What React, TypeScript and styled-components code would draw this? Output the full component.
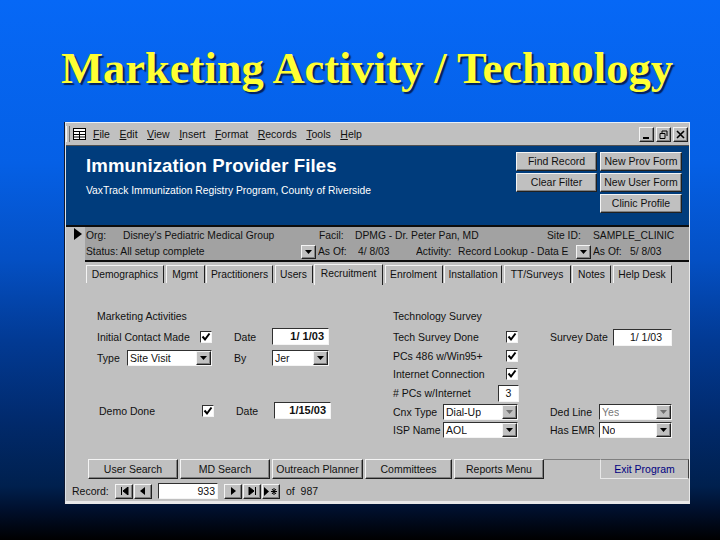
import styled, { createGlobalStyle } from 'styled-components'

const GlobalStyle = createGlobalStyle`
  html,
  body {
    margin: 0;
    padding: 0;
  }
`

const Arrow = ({ muted }: { muted?: boolean }) => (
  <svg width="7" height="4" viewBox="0 0 7 4">
    <path d="M0 0h7L3.5 4z" fill={muted ? '#707070' : '#000'} />
  </svg>
)

const Check = () => (
  <svg width="10" height="10" viewBox="0 0 10 10">
    <path d="M1.5 4.5L4 7.5L8.5 1.5" fill="none" stroke="#000" strokeWidth="2" />
  </svg>
)

function Select({ value, faded, muted }: { value: string; faded?: boolean; muted?: boolean }) {
  return (
    <SelectBox>
      <SelectValue $faded={faded}>{value}</SelectValue>
      <SelectButton>
        <Arrow muted={muted || faded} />
      </SelectButton>
    </SelectBox>
  )
}

function CheckBox() {
  return (
    <CheckBoxBox>
      <Check />
    </CheckBoxBox>
  )
}

const TABS = [
  { label: 'Demographics', width: 78 },
  { label: 'Mgmt', width: 39 },
  { label: 'Practitioners', width: 67 },
  { label: 'Users', width: 38 },
  { label: 'Recruitment', width: 69, active: true },
  { label: 'Enrolment', width: 58 },
  { label: 'Installation', width: 58 },
  { label: 'TT/Surveys', width: 67 },
  { label: 'Notes', width: 39 },
  { label: 'Help Desk', width: 59 },
]

const MENUS = [
  ['F', 'ile'],
  ['E', 'dit'],
  ['V', 'iew'],
  ['I', 'nsert'],
  ['F', 'ormat'],
  ['R', 'ecords'],
  ['T', 'ools'],
  ['H', 'elp'],
]

export default function App() {
  return (
    <Slide>
      <GlobalStyle />
      <Title>Marketing Activity / Technology</Title>
      <Window>
        <MenuBar>
          <Grip />
          <svg width="13" height="12" viewBox="0 0 13 12">
            <rect x="0.5" y="0.5" width="12" height="11" fill="#fff" stroke="#000" />
            <path d="M0 3.5h13M0 6.5h13M0 9h13M6.5 3v9" stroke="#000" />
          </svg>
          <MenuList>
            {MENUS.map(([key, rest]) => (
              <MenuItem key={key + rest}>
                <u>{key}</u>
                {rest}
              </MenuItem>
            ))}
          </MenuList>
          <WindowControls>
            <WindowButton>
              <svg width="9" height="9" viewBox="0 0 9 9">
                <path d="M1 8h6" stroke="#000" strokeWidth="2" />
              </svg>
            </WindowButton>
            <WindowButton>
              <svg width="9" height="9" viewBox="0 0 9 9">
                <path d="M3 1h5v5M3 1v2M1 3.5h5v5H1z" fill="none" stroke="#000" />
              </svg>
            </WindowButton>
            <WindowButton>
              <svg width="9" height="9" viewBox="0 0 9 9">
                <path d="M1 1l7 7M8 1L1 8" stroke="#000" strokeWidth="1.6" />
              </svg>
            </WindowButton>
          </WindowControls>
        </MenuBar>

        <Header>
          <HeaderText>
            <HeaderTitle>Immunization Provider Files</HeaderTitle>
            <HeaderSubtitle>VaxTrack Immunization Registry Program, County of Riverside</HeaderSubtitle>
          </HeaderText>
          <HeaderButtons>
            <HeaderButton>Find Record</HeaderButton>
            <HeaderButton>New Prov Form</HeaderButton>
            <HeaderButton>
              <ClippedLabel>Clear Filter</ClippedLabel>
            </HeaderButton>
            <HeaderButton>
              <ClippedLabel>New User Form</ClippedLabel>
            </HeaderButton>
            <HeaderButton $column={2}>Clinic Profile</HeaderButton>
          </HeaderButtons>
        </Header>

        <InfoSection>
          <RecordSelector>
            <svg width="8" height="12" viewBox="0 0 8 12">
              <path d="M0 0l8 6l-8 6z" fill="#000" />
            </svg>
          </RecordSelector>
          <InfoStrip>
            <InfoRow>
              <InfoCell $width={37}>Org:</InfoCell>
              <InfoCell $width={196}>Disney's Pediatric Medical Group</InfoCell>
              <InfoCell $width={36}>Facil:</InfoCell>
              <InfoCell $width={192}>DPMG - Dr. Peter Pan, MD</InfoCell>
              <InfoCell $width={46}>Site ID:</InfoCell>
              <InfoCell $width={90}>SAMPLE_CLINIC</InfoCell>
            </InfoRow>
            <InfoRow>
              <InfoCell $width={215}>Status: All setup complete</InfoCell>
              <InfoDrop>
                <Arrow />
              </InfoDrop>
              <InfoCell $width={40}>As Of:</InfoCell>
              <InfoCell $width={58}>4/ 8/03</InfoCell>
              <InfoCell $width={42}>Activity:</InfoCell>
              <InfoCell $width={118}>Record Lookup - Data E</InfoCell>
              <InfoDrop>
                <Arrow />
              </InfoDrop>
              <InfoCell $width={37}>As Of:</InfoCell>
              <InfoCell $width={50}>5/ 8/03</InfoCell>
            </InfoRow>
          </InfoStrip>
        </InfoSection>

        <TabBar>
          {TABS.map((tab) => (
            <Tab key={tab.label} $width={tab.width} $active={tab.active}>
              {tab.label}
            </Tab>
          ))}
        </TabBar>

        <FormBody>
          <MarketingPanel>
            <PanelHeading>Marketing Activities</PanelHeading>
            <MarketingGrid>
              <SpanLabel $span={2}>Initial Contact Made</SpanLabel>
              <CheckBox />
              <Spacer />
              <FieldLabel>Date</FieldLabel>
              <DateInput $bold>1/ 1/03</DateInput>
              <FieldLabel>Type</FieldLabel>
              <SelectCell $span={2}>
                <Select value="Site Visit" />
              </SelectCell>
              <Spacer />
              <FieldLabel>By</FieldLabel>
              <Select value="Jer" />
            </MarketingGrid>
            <DemoGrid>
              <SpanLabel $span={2}>Demo Done</SpanLabel>
              <CheckBox />
              <Spacer />
              <FieldLabel>Date</FieldLabel>
              <DateInput $bold>1/15/03</DateInput>
            </DemoGrid>
          </MarketingPanel>

          <TechPanel>
            <PanelHeading>Technology Survey</PanelHeading>
            <TechGrid>
              <SpanLabel $span={3}>Tech Survey Done</SpanLabel>
              <CheckBox />
              <Spacer />
              <SpanLabel $span={2}>Survey Date</SpanLabel>
              <DateInput>1/ 1/03</DateInput>

              <SpanLabel $span={3}>PCs 486 w/Win95+</SpanLabel>
              <CheckBox />
              <RowFill />

              <SpanLabel $span={3}>Internet Connection</SpanLabel>
              <CheckBox />
              <RowFill />

              <SpanLabel $span={2}>#&nbsp;PCs w/Internet</SpanLabel>
              <CountCell>
                <CountInput>3</CountInput>
              </CountCell>
              <RowFill />

              <FieldLabel>Cnx Type</FieldLabel>
              <SelectCell $span={3}>
                <Select value="Dial-Up" muted />
              </SelectCell>
              <Spacer />
              <FieldLabel>Ded Line</FieldLabel>
              <SelectCell $span={2}>
                <Select value="Yes" faded />
              </SelectCell>

              <FieldLabel>ISP Name</FieldLabel>
              <SelectCell $span={3}>
                <Select value="AOL" />
              </SelectCell>
              <Spacer />
              <FieldLabel>Has EMR</FieldLabel>
              <SelectCell $span={2}>
                <Select value="No" />
              </SelectCell>
            </TechGrid>
          </TechPanel>
        </FormBody>

        <ActionBar>
          <ActionButton $width={90}>User Search</ActionButton>
          <ActionButton $width={90}>MD Search</ActionButton>
          <ActionButton $width={91}>Outreach Planner</ActionButton>
          <ActionButton $width={87}>Committees</ActionButton>
          <ActionButton $width={90}>Reports Menu</ActionButton>
          <BarRule />
          <ExitButton>Exit Program</ExitButton>
        </ActionBar>

        <NavBar>
          <NavLabel>Record:</NavLabel>
          <NavButton>
            <svg width="9" height="8" viewBox="0 0 9 8">
              <path d="M1.5 0v8M8 0v8L3 4z" stroke="#000" fill="#000" />
            </svg>
          </NavButton>
          <NavButton>
            <svg width="6" height="8" viewBox="0 0 6 8">
              <path d="M5 0v8L0 4z" fill="#000" />
            </svg>
          </NavButton>
          <NavInput>933</NavInput>
          <NavButton>
            <svg width="6" height="8" viewBox="0 0 6 8">
              <path d="M1 0v8l5-4z" fill="#000" />
            </svg>
          </NavButton>
          <NavButton>
            <svg width="9" height="8" viewBox="0 0 9 8">
              <path d="M7.5 0v8M1 0v8l5-4z" stroke="#000" fill="#000" />
            </svg>
          </NavButton>
          <NavButton>
            <svg width="14" height="9" viewBox="0 0 14 9">
              <path d="M0 0v9l5-4.5z" fill="#000" />
              <path d="M10 1v7M7 4.5h6M8 2l4 5M12 2L8 7" stroke="#000" />
            </svg>
          </NavButton>
          <NavCount>of&nbsp; 987</NavCount>
        </NavBar>
      </Window>
    </Slide>
  )
}

const raised = `
  border-style: solid;
  border-width: 1px;
  border-color: #f4f4f4 #202020 #202020 #f4f4f4;
  box-shadow: inset -1px -1px 0 #808080;
`

const sunken = `
  border-style: solid;
  border-width: 1px;
  border-color: #303030 #f4f4f4 #f4f4f4 #303030;
`

const Slide = styled.div`
  width: 720px;
  height: 540px;
  overflow: hidden;
  display: flex;
  flex-direction: column;
  background: linear-gradient(
    to bottom,
    #0668f6 0%,
    #0560e6 30%,
    #0450c4 48%,
    #023a94 63%,
    #012a6c 78%,
    #00204e 90%,
    #000f2c 94.5%,
    #000 100%
  );
`

const Title = styled.h1`
  margin: 0;
  height: 122px;
  box-sizing: border-box;
  padding: 43px 0 0 14px;
  text-align: center;
  font-family: 'Liberation Serif', serif;
  font-size: 44.5px;
  line-height: 50px;
  font-weight: 700;
  color: #ffff33;
  text-shadow: 2px 2px 1px #04205a;
  white-space: nowrap;
`

const Window = styled.div`
  width: 625px;
  height: 382px;
  margin-left: 65px;
  box-sizing: border-box;
  border-top: 1px solid #e8f0f8;
  border-left: 1px solid #d8e0e8;
  border-right: 1px solid #e8e8e8;
  border-bottom: 3px solid #e8e8e8;
  box-shadow: -1px 0 0 #101830;
  background: #c0c0c0;
  display: flex;
  flex-direction: column;
  font-family: 'Liberation Sans', Arial, sans-serif;
  font-size: 10.5px;
  color: #101010;
`

const MenuBar = styled.div`
  height: 22px;
  flex: none;
  display: flex;
  align-items: center;
  padding: 0 1px 0 0;
`

const Grip = styled.div`
  width: 2px;
  height: 16px;
  margin-right: 3px;
  border-left: 1px solid #f4f4f4;
  border-right: 1px solid #707070;
`

const MenuList = styled.div`
  display: flex;
  margin-left: 7px;
  gap: 9.5px;
  flex: 1;
`

const MenuItem = styled.span`
  u {
    text-underline-offset: 1px;
  }
`

const WindowControls = styled.div`
  display: flex;
  gap: 2px;
`

const WindowButton = styled.div`
  ${raised}
  box-sizing: border-box;
  width: 15px;
  height: 15px;
  display: flex;
  align-items: center;
  justify-content: center;
`

const Header = styled.div`
  height: 82px;
  flex: none;
  box-sizing: border-box;
  background: #003c7c;
  border-top: 1px solid #505050;
  border-bottom: 2px solid #0c0c0c;
  display: flex;
  justify-content: space-between;
  padding: 6px 7px 0 20px;
`

const HeaderText = styled.div`
  color: #fff;
`

const HeaderTitle = styled.div`
  margin-top: 4px;
  font-size: 18.6px;
  line-height: 20px;
  font-weight: 700;
  letter-spacing: 0.1px;
`

const HeaderSubtitle = styled.div`
  margin-top: 8px;
  font-size: 10.3px;
  line-height: 14px;
`

const HeaderButtons = styled.div`
  display: grid;
  grid-template-columns: 81px 82px;
  grid-auto-rows: 19px;
  column-gap: 3px;
  row-gap: 2px;
`

const HeaderButton = styled.div<{ $column?: number }>`
  ${raised}
  box-sizing: border-box;
  background: #c0c0c0;
  text-align: center;
  overflow: hidden;
  color: #101010;
  line-height: 17px;
  grid-column: ${({ $column }) => $column ?? 'auto'};
`

const ClippedLabel = styled.span`
  display: block;
  height: 13px;
  overflow: hidden;
`

const InfoSection = styled.div`
  height: 35px;
  flex: none;
  display: flex;
`

const RecordSelector = styled.div`
  width: 19px;
  flex: none;
  display: flex;
  justify-content: flex-end;
  padding: 1px 3px 0 0;
  box-sizing: border-box;
`

const InfoStrip = styled.div`
  flex: 1;
  background: #a2a2a2;
  border-bottom: 2px solid #0c0c0c;
  padding-left: 1px;
  font-size: 10.3px;
`

const InfoRow = styled.div`
  height: 16.5px;
  display: flex;
  align-items: center;
`

const InfoCell = styled.span<{ $width: number }>`
  width: ${({ $width }) => $width}px;
  flex: none;
  white-space: nowrap;
  overflow: hidden;
`

const InfoDrop = styled.div`
  ${raised}
  width: 15px;
  height: 14px;
  box-sizing: border-box;
  margin-right: 2px;
  background: #c0c0c0;
  flex: none;
  display: flex;
  align-items: center;
  justify-content: center;
`

const TabBar = styled.div`
  height: 22px;
  flex: none;
  display: flex;
  align-items: flex-end;
  gap: 1.5px;
  padding-left: 20px;
`

const Tab = styled.div<{ $width: number; $active?: boolean }>`
  box-sizing: border-box;
  width: ${({ $width }) => $width}px;
  height: ${({ $active }) => ($active ? '21px' : '18px')};
  margin-bottom: ${({ $active }) => ($active ? '-1px' : '1px')};
  border-style: solid;
  border-width: 1px 1px 0 1px;
  border-color: #f4f4f4 #202020 #f4f4f4 #f4f4f4;
  text-align: center;
  line-height: 17px;
  font-size: 10.3px;
  white-space: nowrap;
`

const FormBody = styled.div`
  flex: 1;
  display: flex;
  padding: 24px 0 0 31px;
`

const PanelHeading = styled.div`
  height: 17px;
  line-height: 17px;
`

const MarketingPanel = styled.div`
  width: 296px;
`

const TechPanel = styled.div`
  flex: 1;
`

const MarketingGrid = styled.div`
  display: grid;
  grid-template-columns: 30px 73px 12px 22px 38px 57px;
  grid-auto-rows: 21px;
  align-items: center;
  margin-top: 1px;
`

const DemoGrid = styled(MarketingGrid)`
  margin: 32px 0 0 2px;
`

const TechGrid = styled.div`
  display: grid;
  grid-template-columns: 50px 55px 8px 12px 32px 49px 14px 59px;
  grid-auto-rows: 18.6px;
  align-items: center;
  margin-top: 3px;
`

const FieldLabel = styled.span`
  white-space: nowrap;
`

const SpanLabel = styled(FieldLabel)<{ $span: number }>`
  grid-column: span ${({ $span }) => $span};
`

const Spacer = styled.span``

const RowFill = styled.span`
  grid-column: span 4;
`

const SelectCell = styled.div<{ $span: number }>`
  grid-column: span ${({ $span }) => $span};
`

const CheckBoxBox = styled.div`
  ${sunken}
  width: 12px;
  height: 12px;
  box-sizing: border-box;
  background: #fff;
  display: flex;
  align-items: center;
  justify-content: center;
`

const SelectBox = styled.div`
  ${sunken}
  height: 16px;
  box-sizing: border-box;
  background: #fff;
  display: flex;
  justify-content: space-between;
  align-items: stretch;
`

const SelectValue = styled.span<{ $faded?: boolean }>`
  padding-left: 2px;
  line-height: 14px;
  color: ${({ $faded }) => ($faded ? '#777' : '#101010')};
  white-space: nowrap;
  overflow: hidden;
`

const SelectButton = styled.span`
  ${raised}
  width: 15px;
  flex: none;
  box-sizing: border-box;
  background: #c0c0c0;
  display: flex;
  align-items: center;
  justify-content: center;
`

const DateInput = styled.div<{ $bold?: boolean }>`
  ${sunken}
  height: 17px;
  box-sizing: border-box;
  background: #fff;
  text-align: right;
  padding-right: ${({ $bold }) => ($bold ? '4px' : '9px')};
  line-height: 15px;
  font-size: ${({ $bold }) => ($bold ? '11px' : '10.5px')};
  font-weight: ${({ $bold }) => ($bold ? 700 : 400)};
`

const CountCell = styled.div`
  grid-column: span 2;
`

const CountInput = styled.div`
  ${sunken}
  width: 21px;
  height: 17px;
  box-sizing: border-box;
  background: #fff;
  text-align: center;
  line-height: 15px;
`

const ActionBar = styled.div`
  height: 22px;
  flex: none;
  display: flex;
  gap: 2px;
  padding-left: 22px;
  align-items: flex-start;
`

const ActionButton = styled.div<{ $width: number }>`
  ${raised}
  width: ${({ $width }) => $width}px;
  height: 20px;
  box-sizing: border-box;
  text-align: center;
  line-height: 18px;
  white-space: nowrap;
`

const BarRule = styled.div`
  width: 56px;
  margin: 0 -2px;
  border-top: 1px solid #808080;
`

const ExitButton = styled(ActionButton).attrs({ $width: 89 })`
  border-color: #808080 #404040 #e8e8e8 #e8e8e8;
  box-shadow: none;
  color: #000080;
`

const NavBar = styled.div`
  height: 20px;
  flex: none;
  display: flex;
  align-items: center;
  padding-left: 6px;
  gap: 1px;
`

const NavLabel = styled.span`
  width: 42px;
`

const NavButton = styled.div`
  ${raised}
  width: 18px;
  height: 15px;
  box-sizing: border-box;
  display: flex;
  align-items: center;
  justify-content: center;
`

const NavInput = styled.div`
  ${sunken}
  width: 60px;
  height: 16px;
  box-sizing: border-box;
  margin: 0 5px;
  background: #fff;
  text-align: right;
  padding-right: 2px;
  line-height: 14px;
`

const NavCount = styled.span`
  margin-left: 5px;
`
